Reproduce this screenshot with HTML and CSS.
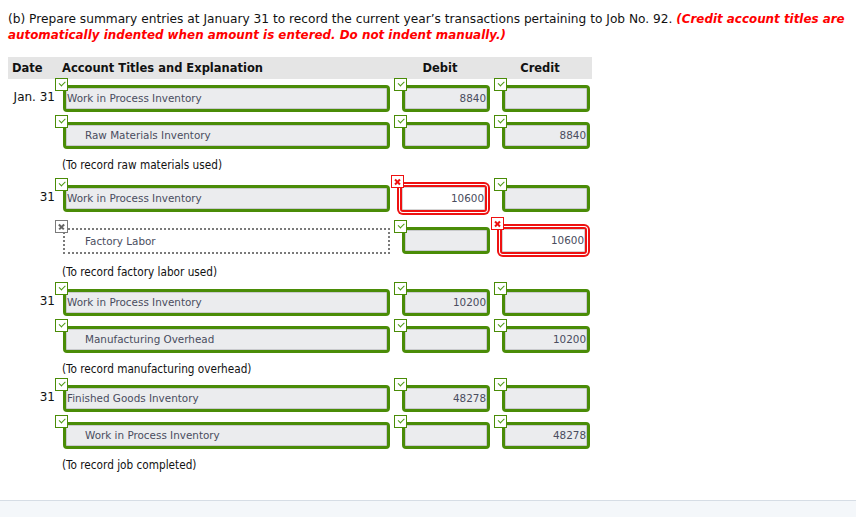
FILE: index.html
```html
<!DOCTYPE html>
<html>
<head>
<meta charset="utf-8">
<link rel="stylesheet" href="styles.css">
</head>
<body>
<div class="page">
  <p class="prompt">(b) Prepare summary entries at January 31 to record the current year’s transactions pertaining to Job No. 92. <em class="note">(Credit account titles are</em> <em class="note">automatically indented when amount is entered. Do not indent manually.)</em></p>

  <div class="journal">
    <div class="head">
      <div class="h-date">Date</div>
      <div class="h-acct">Account Titles and Explanation</div>
      <div class="h-amt">Debit</div>
      <div class="h-amt">Credit</div>
    </div>

    <!-- Entry 1 -->
    <div class="row r-first">
      <div class="date">Jan. 31</div>
      <div class="cell acct"><span class="mark ok"></span><div class="field">Work in Process Inventory</div></div>
      <div class="cell amt"><span class="mark ok"></span><div class="field num">8840</div></div>
      <div class="cell amt"><span class="mark ok"></span><div class="field num"></div></div>
    </div>
    <div class="row r-next">
      <div class="date"></div>
      <div class="cell acct"><span class="mark ok"></span><div class="field indent">Raw Materials Inventory</div></div>
      <div class="cell amt"><span class="mark ok"></span><div class="field num"></div></div>
      <div class="cell amt"><span class="mark ok"></span><div class="field num">8840</div></div>
    </div>
    <div class="expl e1">(To record raw materials used)</div>

    <!-- Entry 2 -->
    <div class="row r-e2">
      <div class="date">31</div>
      <div class="cell acct"><span class="mark ok"></span><div class="field">Work in Process Inventory</div></div>
      <div class="cell amt"><span class="mark bad"></span><div class="field num wrong">10600</div></div>
      <div class="cell amt"><span class="mark ok"></span><div class="field num"></div></div>
    </div>
    <div class="row r-e2b">
      <div class="date"></div>
      <div class="cell acct"><span class="mark none"></span><div class="field indent dotted">Factory Labor</div></div>
      <div class="cell amt"><span class="mark ok"></span><div class="field num"></div></div>
      <div class="cell amt"><span class="mark bad"></span><div class="field num wrong">10600</div></div>
    </div>
    <div class="expl e2">(To record factory labor used)</div>

    <!-- Entry 3 -->
    <div class="row r-e3">
      <div class="date">31</div>
      <div class="cell acct"><span class="mark ok"></span><div class="field">Work in Process Inventory</div></div>
      <div class="cell amt"><span class="mark ok"></span><div class="field num">10200</div></div>
      <div class="cell amt"><span class="mark ok"></span><div class="field num"></div></div>
    </div>
    <div class="row r-e3b">
      <div class="date"></div>
      <div class="cell acct"><span class="mark ok"></span><div class="field indent">Manufacturing Overhead</div></div>
      <div class="cell amt"><span class="mark ok"></span><div class="field num"></div></div>
      <div class="cell amt"><span class="mark ok"></span><div class="field num">10200</div></div>
    </div>
    <div class="expl e3">(To record manufacturing overhead)</div>

    <!-- Entry 4 -->
    <div class="row r-e4">
      <div class="date">31</div>
      <div class="cell acct"><span class="mark ok"></span><div class="field">Finished Goods Inventory</div></div>
      <div class="cell amt"><span class="mark ok"></span><div class="field num">48278</div></div>
      <div class="cell amt"><span class="mark ok"></span><div class="field num"></div></div>
    </div>
    <div class="row r-next">
      <div class="date"></div>
      <div class="cell acct"><span class="mark ok"></span><div class="field indent">Work in Process Inventory</div></div>
      <div class="cell amt"><span class="mark ok"></span><div class="field num"></div></div>
      <div class="cell amt"><span class="mark ok"></span><div class="field num">48278</div></div>
    </div>
    <div class="expl e4">(To record job completed)</div>
  </div>
</div>
<div class="footer"></div>
</body>
</html>
```
FILE: styles.css
```css
html, body {
  margin: 0;
  padding: 0;
  background: #fff;
}
body {
  font-family: "DejaVu Sans", Verdana, sans-serif;
  color: #111;
  height: 517px;
  overflow: hidden;
  display: flex;
  flex-direction: column;
}
.page {
  padding: 0 8px;
  height: 500px;
}
.prompt {
  margin: 11px 0 0;
  font-size: 12.2px;
  line-height: 16px;
  color: #111;
}
.note {
  color: #f00;
  font-weight: bold;
  font-style: italic;
  font-size: 11.9px;
}
.journal {
  width: 584px;
  margin-top: 14px;
}
.head {
  display: flex;
  align-items: center;
  height: 22px;
  background: #e5e5e5;
  font-size: 11.5px;
  font-weight: bold;
  color: #111;
}
.h-date {
  width: 54px;
  padding-left: 4px;
  box-sizing: border-box;
}
.h-acct {
  width: 328px;
}
.h-amt {
  width: 100px;
  text-align: center;
}
.row {
  display: flex;
  height: 27px;
}
.r-first { margin-top: 6px; }
.r-next { margin-top: 10px; }
.r-e2 { margin-top: 12px; }
.r-e2b { margin-top: 15px; }
.r-e3 { margin-top: 9px; }
.r-e3b { margin-top: 10px; }
.r-e4 { margin-top: 8px; }
.date {
  width: 47px;
  text-align: right;
  font-size: 12px;
  line-height: 25px;
  color: #111;
}
.cell {
  position: relative;
}
.acct {
  width: 327px;
  margin-left: 8px;
}
.amt {
  width: 88px;
  margin-left: 12px;
}
.field {
  box-sizing: border-box;
  height: 27px;
  border: 3px solid #4a8c07;
  border-radius: 4px;
  background: #ebecee;
  box-shadow: inset 0 0 0 1px #c9cacd;
  font-size: 10.4px;
  line-height: 21px;
  color: #4a4d5e;
  padding: 0 0 0 1px;
  white-space: nowrap;
  overflow: hidden;
}
.field.indent {
  padding-left: 19px;
}
.field.num {
  text-align: right;
  padding-right: 1px;
}
.field.dotted {
  border: 2px dotted #7a7a7a;
  border-radius: 0;
  background: #fff;
  box-shadow: none;
  height: 26px;
  margin-top: 1px;
  line-height: 22px;
  padding-left: 20px;
}
.field.wrong {
  border: 2px solid #ee1111;
  border-radius: 3px;
  background: #fff;
  box-shadow: 0 0 0 1px #fff, 0 0 0 3px #ee1111, inset 0 0 0 1px #d4d4d4;
  margin-left: -2px;
  width: 87px;
  line-height: 23px;
  color: #4a4d5e;
}
.mark {
  position: absolute;
  left: -8px;
  top: -7px;
  width: 13px;
  height: 13px;
  box-sizing: border-box;
  background: #fff;
  z-index: 2;
}
.mark.ok {
  border: 1px solid #4a8c07;
}
.mark.ok::after {
  content: "";
  position: absolute;
  left: 3px;
  top: 2px;
  width: 5px;
  height: 2.5px;
  border-left: 1.5px solid #4a9a10;
  border-bottom: 1.5px solid #4a9a10;
  transform: rotate(-45deg);
}
.mark.bad {
  border: 1px solid #ee1111;
  left: -11px;
  top: -10px;
}
.mark.none {
  border: 1px solid #7a7a7a;
}
.mark.bad::before, .mark.bad::after,
.mark.none::before, .mark.none::after {
  content: "";
  position: absolute;
  left: 2px;
  top: 5px;
  width: 7px;
  height: 2px;
  background: #ee1111;
  transform: rotate(45deg);
}
.mark.bad::after, .mark.none::after {
  transform: rotate(-45deg);
}
.mark.none::before, .mark.none::after {
  background: #666;
  height: 1.5px;
}
.expl {
  margin-left: 54px;
  font-family: "DejaVu Sans Condensed", "DejaVu Sans", sans-serif;
  font-size: 11.7px;
  line-height: 16px;
  color: #111;
}
.e1 { margin-top: 8px; }
.e2 { margin-top: 10px; }
.e3 { margin-top: 8px; }
.e4 { margin-top: 8px; }
.footer {
  flex: 1;
  border-top: 1px solid #d6dde5;
  background: #f4f7fa;
}
```
